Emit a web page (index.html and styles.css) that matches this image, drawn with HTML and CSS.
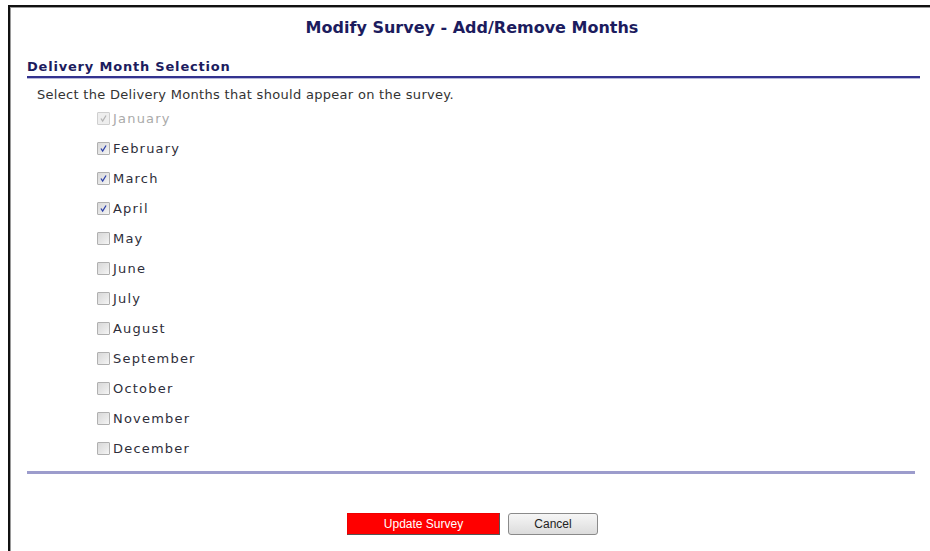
FILE: index.html
```html
<!DOCTYPE html>
<html>
<head>
<meta charset="utf-8">
<title>Modify Survey - Add/Remove Months</title>
<link rel="stylesheet" href="styles.css">
</head>
<body>
<div class="frame">
  <h1 class="title">Modify Survey - Add/Remove Months</h1>
  <div class="section">
    <h2 class="section-head">Delivery Month Selection</h2>
    <p class="intro">Select the Delivery Months that should appear on the survey.</p>
    <ul class="months">
      <li class="month disabled"><span class="box checked"><svg viewBox="0 0 13 13"><path d="M3.5 6.5 L5.5 9.5 L9.5 3" /></svg></span>January</li>
      <li class="month"><span class="box checked"><svg viewBox="0 0 13 13"><path d="M3.5 6.5 L5.5 9.5 L9.5 3" /></svg></span>February</li>
      <li class="month"><span class="box checked"><svg viewBox="0 0 13 13"><path d="M3.5 6.5 L5.5 9.5 L9.5 3" /></svg></span>March</li>
      <li class="month"><span class="box checked"><svg viewBox="0 0 13 13"><path d="M3.5 6.5 L5.5 9.5 L9.5 3" /></svg></span>April</li>
      <li class="month"><span class="box"></span>May</li>
      <li class="month"><span class="box"></span>June</li>
      <li class="month"><span class="box"></span>July</li>
      <li class="month"><span class="box"></span>August</li>
      <li class="month"><span class="box"></span>September</li>
      <li class="month"><span class="box"></span>October</li>
      <li class="month"><span class="box"></span>November</li>
      <li class="month"><span class="box"></span>December</li>
    </ul>
    <div class="rule"></div>
  </div>
  <div class="actions">
    <button class="btn btn-primary" type="button">Update Survey</button>
    <button class="btn btn-cancel" type="button">Cancel</button>
  </div>
</div>
</body>
</html>
```

FILE: styles.css
```css
html, body {
  margin: 0;
  padding: 0;
  background: #fff;
}

body {
  font-family: "DejaVu Sans", Verdana, sans-serif;
  color: #333;
  width: 930px;
  height: 551px;
  overflow: hidden;
}

.frame {
  margin: 5px 0 0 8px;
  border-top: 2px solid #111;
  border-left: 2px solid #111;
  box-shadow: inset 1px 1px 0 #9a9a9a;
  height: 560px;
  box-sizing: border-box;
}

.title {
  margin: 0;
  height: 40px;
  line-height: 42px;
  text-align: center;
  font-size: 16px;
  font-weight: bold;
  color: #1c1c5e;
  padding-left: 4px;
}

.section {
  padding: 0 10px 0 17px;
}

.section-head {
  margin: 0;
  padding-top: 11px;
  height: 18px;
  line-height: 18px;
  font-size: 13px;
  letter-spacing: 0.8px;
  font-weight: bold;
  color: #1c1c5e;
  border-bottom: 2px solid #33338f;
  box-shadow: 0 1px 0 #b8b8dc;
}

.intro {
  margin: 0;
  padding: 9px 0 0 10px;
  height: 16px;
  line-height: 16px;
  font-size: 13px;
  letter-spacing: 0.3px;
  color: #333;
}

.months {
  list-style: none;
  margin: 0;
  padding: 0 0 0 70px;
}

.month {
  height: 30px;
  display: flex;
  align-items: center;
  font-size: 13px;
  letter-spacing: 1.2px;
  color: #2e2e3a;
}

.month.disabled {
  color: #aaa;
}

.box {
  width: 11px;
  height: 11px;
  margin-right: 3px;
  border: 1px solid #b0b0b0;
  border-radius: 1px;
  background: linear-gradient(135deg, #d8d8d8 0%, #e8e8e8 60%, #f6f6f6 100%);
  display: inline-flex;
  flex: none;
}

.box svg {
  width: 11px;
  height: 11px;
  fill: none;
  stroke: #2b3fa8;
  stroke-width: 1.5;
}

.disabled .box {
  border-color: #cfcfcf;
  background: #eeeeee;
}

.disabled .box svg {
  stroke: #b4b4b4;
}

.rule {
  margin: 8px 5px 0 0;
  height: 3px;
  background: #9c9ccc;
}

.actions {
  display: flex;
  justify-content: center;
  gap: 8px;
  padding-top: 39px;
  padding-left: 5px;
}

.btn {
  height: 22px;
  font-family: "Liberation Sans", Arial, sans-serif;
  font-size: 12px;
  padding: 0;
  cursor: pointer;
}

.btn-primary {
  width: 153px;
  background: #ff0000;
  color: #fff;
  border: 1px solid #e00;
  border-right-color: #555;
  border-bottom-color: #555;
}

.btn-cancel {
  width: 90px;
  color: #222;
  border: 1px solid #8a8a8a;
  border-radius: 3px;
  background: linear-gradient(#f6f6f6, #dcdcdc);
}
```
